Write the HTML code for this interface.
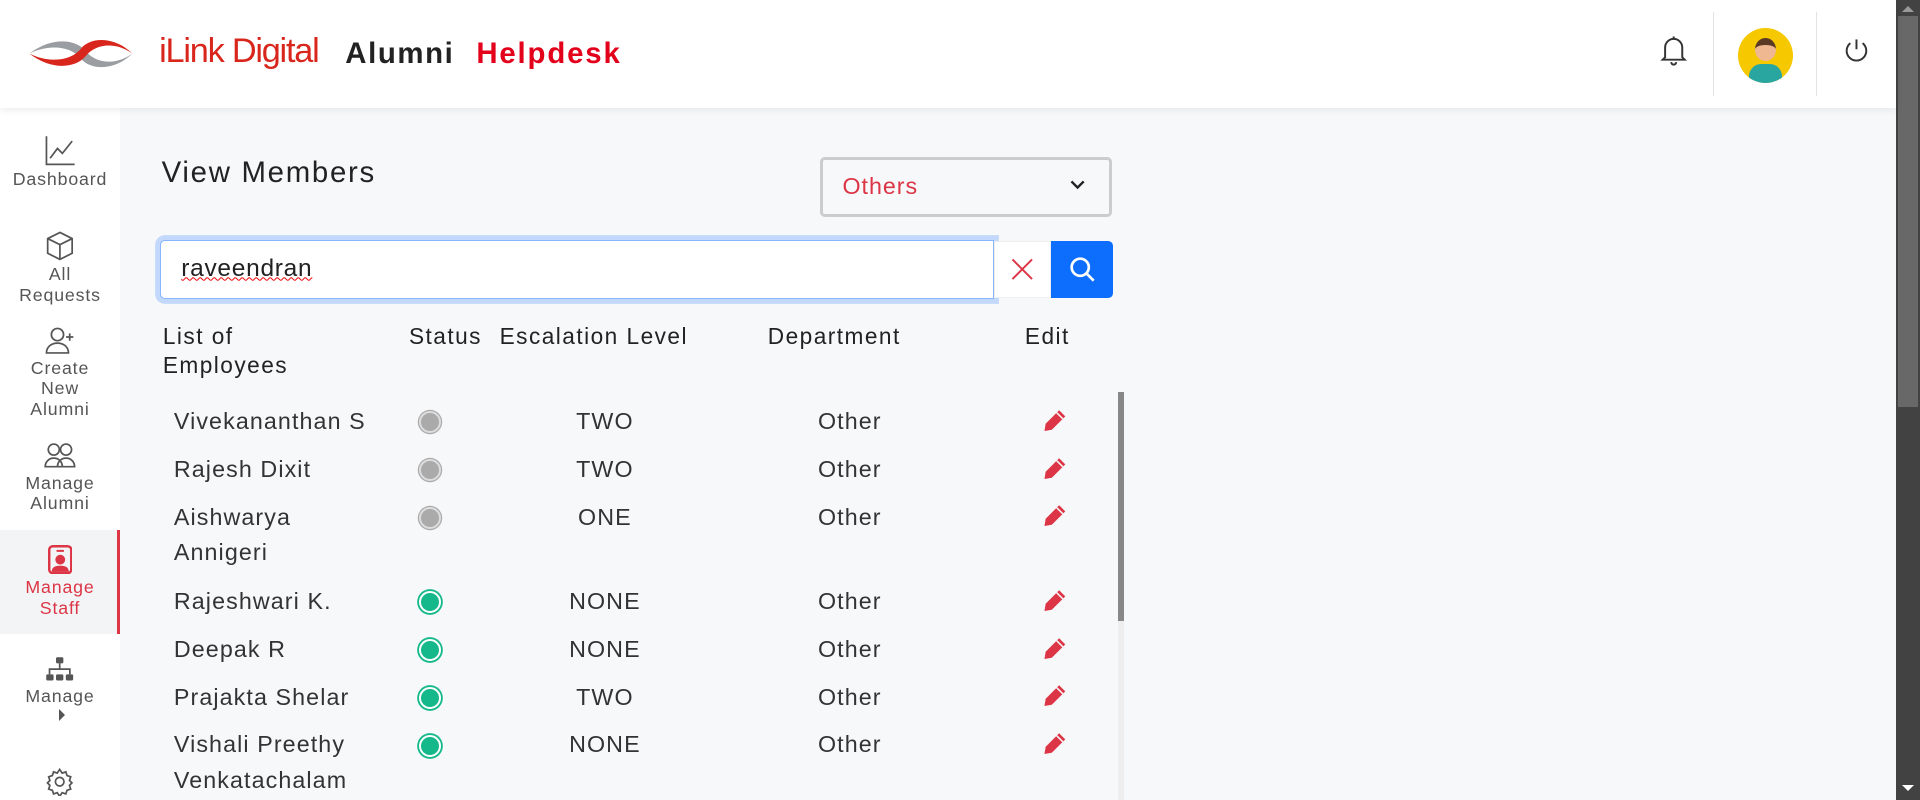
<!DOCTYPE html>
<html><head><meta charset="utf-8"><style>
html{zoom:1.2245}
*{box-sizing:border-box;margin:0;padding:0}
body{width:1568px;height:653px;overflow:hidden;background:#f7f8fa;font-family:"Liberation Sans",sans-serif;color:#222;position:relative}
.hdr{position:absolute;left:0;top:0;width:1548px;height:88px;background:#fff;box-shadow:0 2px 6px rgba(0,0,0,.08);z-index:2}
.abs{position:absolute}
.side{position:absolute;left:0;top:88px;width:98px;height:565px;background:#fff}
.it{position:absolute;left:0;width:98px;text-align:center;font-size:14.5px;color:#555;line-height:17px;letter-spacing:.7px}
.it svg{display:block;margin:0 auto 2px}
.hd{position:absolute;top:263px;font-size:18.5px;color:#222;line-height:24px;letter-spacing:1.2px}
.r{position:absolute;font-size:19px;color:#333;line-height:29px;letter-spacing:.9px}
.c{position:absolute;width:18px;height:18px;border-radius:50%}
.g{background:#aaa;border:2px solid #ddd;box-shadow:0 0 0 1px #aaa}
.gr{background:#14b88a;border:2px solid #fff;box-shadow:0 0 0 1.5px #14b88a}
</style></head><body>
<div class="hdr">
<svg class="abs" style="left:22px;top:28px" width="88" height="32" viewBox="0 0 88 32"><path d="M2 16 C20 2 40 4 48 14 C56 24 72 26 86 16 C72 30 52 30 44 20 C36 10 18 8 2 16Z" fill="#9a9ea2"/><path d="M2 16 C20 30 40 28 48 18 C56 8 72 6 86 16 C72 2 52 2 44 12 C36 22 18 24 2 16Z" fill="#d9261c"/></svg>
<div class="abs" style="left:130px;top:26px;font-size:28px;color:#d9261c;letter-spacing:-1px">iLink Digital</div>
<div class="abs" style="left:282px;top:30px;font-size:24px;font-weight:bold;color:#222;letter-spacing:1.3px">Alumni</div>
<div class="abs" style="left:389px;top:30px;font-size:24px;font-weight:bold;color:#e3001b;letter-spacing:1.5px">Helpdesk</div>
<svg class="abs" style="left:1355px;top:28px" width="24" height="26" viewBox="0 0 24 26" fill="none" stroke="#333" stroke-width="1.6"><path d="M5 19V11a7 7 0 0114 0v8l2 2H3z"/><path d="M10 23a2 2 0 004 0"/><path d="M12 2v2"/></svg>
<div class="abs" style="left:1399px;top:10px;width:1px;height:68px;background:#e3e3e3"></div>
<div class="abs" style="left:1419px;top:23px;width:45px;height:45px;border-radius:50%;background:#f5c800;overflow:hidden"><div class="abs" style="left:14px;top:8px;width:17px;height:19px;border-radius:50%;background:#f0b890;border-top:6px solid #5a3a24"></div><div class="abs" style="left:9px;top:29px;width:27px;height:20px;border-radius:10px 10px 0 0;background:#2aa6a0"></div></div>
<div class="abs" style="left:1483px;top:10px;width:1px;height:68px;background:#e3e3e3"></div>
<svg class="abs" style="left:1505px;top:30px" width="22" height="22" viewBox="0 0 22 22" fill="none" stroke="#333" stroke-width="1.6"><path d="M11 2v8"/><path d="M6 5a8 8 0 1010 0"/></svg>
</div>
<div class="abs" style="left:1548px;top:0;width:20px;height:653px;background:#424242"></div>
<div class="abs" style="left:1550px;top:13px;width:16px;height:319px;background:#686868"></div>
<div class="abs" style="left:1553px;top:5px;border:5px solid transparent;border-bottom-color:#999;border-top:0"></div>
<div class="abs" style="left:1553px;top:641px;border:5px solid transparent;border-top-color:#fff;border-bottom:0"></div>
<div class="side">
<div class="it" style="top:22px"><svg width="26" height="26" viewBox="0 0 26 26" fill="none" stroke="#555" stroke-width="1.4"><path d="M2 1v23h23"/><path d="M5 19l6-8 4 4 8-10"/></svg>Dashboard</div>
<div class="it" style="top:100px"><svg width="26" height="26" viewBox="0 0 26 26" fill="none" stroke="#555" stroke-width="1.4"><path d="M13 2l10 5v12l-10 5-10-5V7z"/><path d="M3 7l10 5 10-5M13 12v12"/></svg>All<br>Requests</div>
<div class="it" style="top:178px"><svg width="26" height="24" viewBox="0 0 26 24" fill="none" stroke="#555" stroke-width="1.4"><circle cx="11" cy="7" r="5"/><path d="M2 22c0-5 4-8 9-8s9 3 9 8z"/><path d="M21 6v6M18 9h6"/></svg>Create<br>New<br>Alumni</div>
<div class="it" style="top:272px"><svg width="26" height="24" viewBox="0 0 26 24" fill="none" stroke="#555" stroke-width="1.4"><circle cx="8" cy="7" r="4.5"/><circle cx="18" cy="7" r="4.5"/><path d="M1 21c0-4 3-7 7-7s7 3 7 7zM11 21c0-4 3-7 7-7s7 3 7 7z"/></svg>Manage<br>Alumni</div>
<div class="abs" style="left:0;top:345px;width:98px;height:85px;background:#f3f4f6;border-right:3px solid #dc3545"></div>
<div class="it" style="top:357px;color:#dc3545"><svg width="20" height="24" viewBox="0 0 20 24"><rect x="1" y="1" width="18" height="22" rx="3" fill="none" stroke="#dc3545" stroke-width="2"/><rect x="7" y="4" width="6" height="1.6" fill="#dc3545"/><circle cx="10" cy="12" r="4" fill="#dc3545"/><path d="M3 22c0-4 3-5 7-5s7 1 7 5z" fill="#dc3545"/></svg>Manage<br>Staff</div>
<div class="it" style="top:448px"><svg width="24" height="22" viewBox="0 0 24 22" fill="#555"><rect x="9" y="1" width="6" height="5" rx="1"/><rect x="1" y="15" width="6" height="5" rx="1"/><rect x="9" y="15" width="6" height="5" rx="1"/><rect x="17" y="15" width="6" height="5" rx="1"/><path d="M11.3 6h1.4v4h8.3v5h-1.4v-3.6H4.4V15H3v-5h8.3z"/></svg>Manage<div style="margin:2px 0 0 48px;width:0;border:5px solid transparent;border-left-color:#555;border-right:0"></div></div>
<div class="it" style="top:538px"><svg width="24" height="24" viewBox="0 0 24 24" fill="none" stroke="#555" stroke-width="1.4"><circle cx="12" cy="12" r="3.5"/><path d="M12 2l2 3 3-1 1 3 3 1-1 3 2 2-2 2 1 3-3 1-1 3-3-1-2 3-2-3-3 1-1-3-3-1 1-3-2-2 2-2-1-3 3-1 1-3 3 1z"/></svg></div>
</div>
<div class="abs" style="left:132px;top:127px;font-size:24px;color:#222;letter-spacing:1.4px">View Members</div>
<div class="abs" style="left:670px;top:128px;width:238px;height:49px;border:3px solid #ccc;border-radius:4px;background:#f7f8fa"></div>
<div class="abs" style="left:688px;top:141px;font-size:19px;color:#dc3545;letter-spacing:.8px">Others</div>
<svg class="abs" style="left:873px;top:146px" width="14" height="10" viewBox="0 0 14 10" fill="none" stroke="#222" stroke-width="2"><path d="M2 2l5 5 5-5"/></svg>
<div class="abs" style="left:131px;top:196px;width:681px;height:48px;border:1px solid #86b7fe;box-shadow:0 0 0 4px rgba(13,110,253,.22);border-radius:4px 0 0 4px;background:#fff"></div>
<div class="abs" style="left:148px;top:208px;font-size:20px;color:#222;letter-spacing:.6px;text-decoration:underline wavy #e00;text-decoration-thickness:1px">raveendran</div>
<div class="abs" style="left:812px;top:197px;width:46px;height:46px;background:#fff;border:1px solid #eee"></div>
<svg class="abs" style="left:825px;top:210px" width="20" height="20" viewBox="0 0 20 20" stroke="#dc3545" stroke-width="1.6"><path d="M2 2l16 16M18 2L2 18"/></svg>
<div class="abs" style="left:858px;top:197px;width:51px;height:46px;background:#0d6efd;border-radius:0 4px 4px 0"></div>
<svg class="abs" style="left:872px;top:208px" width="24" height="24" viewBox="0 0 24 24" fill="none" stroke="#fff" stroke-width="2.2"><circle cx="10" cy="10" r="7"/><path d="M15 15l6 6"/></svg>
<div class="hd" style="left:133px">List of<br>Employees</div>
<div class="hd" style="left:334px">Status</div>
<div class="hd" style="left:408px">Escalation Level</div>
<div class="hd" style="left:627px">Department</div>
<div class="hd" style="left:837px">Edit</div>
<div class="abs" style="left:913px;top:320px;width:5px;height:333px;background:#eee"></div>
<div class="abs" style="left:913px;top:320px;width:5px;height:187px;background:#888"></div>
<div id="rows"></div>
<script>
var d=[["Vivekananthan S",0,"TWO",330],["Rajesh Dixit",0,"TWO",369],["Aishwarya<br>Annigeri",0,"ONE",408],["Rajeshwari K.",1,"NONE",477],["Deepak R",1,"NONE",516],["Prajakta Shelar",1,"TWO",555],["Vishali Preethy<br>Venkatachalam",1,"NONE",594]];
var h="";d.forEach(function(r){var y=r[3];
h+='<div class="r" style="left:142px;top:'+y+'px">'+r[0]+'</div>';
h+='<div class="c '+(r[1]?'gr':'g')+'" style="left:342px;top:'+(y+6)+'px"></div>';
h+='<div class="r" style="left:414px;width:160px;text-align:center;top:'+y+'px">'+r[2]+'</div>';
h+='<div class="r" style="left:634px;width:120px;text-align:center;top:'+y+'px">Other</div>';
h+='<svg class="abs" style="left:851px;top:'+(y+4)+'px" width="20" height="20" viewBox="0 0 20 20" fill="#dc3545"><path d="M14 1l5 5-11 11-6 1 1-6z"/><path d="M12 3l5 5" stroke="#f7f8fa" stroke-width="1.2"/></svg>';});
document.getElementById("rows").innerHTML=h;
</script>
</body></html>
